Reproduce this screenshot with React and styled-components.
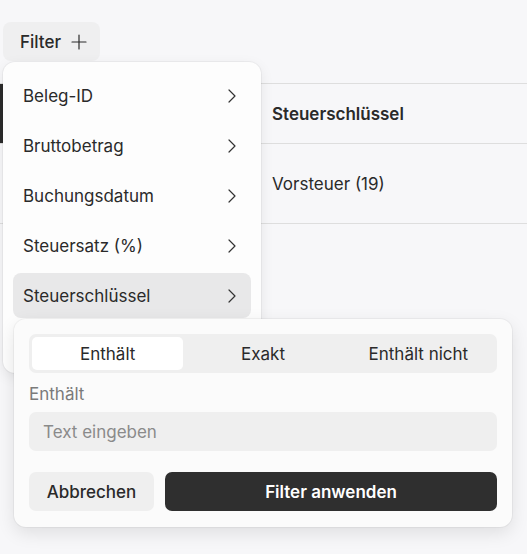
import React from "react";
import styled, { createGlobalStyle } from "styled-components";
import { ChevronRight, Plus } from "lucide-react";

const GlobalStyle = createGlobalStyle`
  * { box-sizing: border-box; }
  html, body { margin: 0; padding: 0; }
  body {
    background: #f7f7f9;
    font-family: Inter, "Noto Sans", "Liberation Sans", sans-serif;
    color: #2a2a2a;
    -webkit-font-smoothing: antialiased;
  }
`;

const Page = styled.div`
  position: relative;
  width: 527px;
  height: 554px;
  overflow: hidden;
  padding-top: 22px;
`;

const Toolbar = styled.div`
  display: flex;
  padding-left: 3px;
`;

const FilterButton = styled.button`
  display: flex;
  align-items: center;
  gap: 6px;
  height: 39px;
  padding: 0 9px 0 17px;
  border: none;
  border-radius: 8px;
  background: #efeff0;
  font: 500 17px Inter, sans-serif;
  color: #2a2a2a;
`;

const Table = styled.div`
  margin-top: 22px;
  border-top: 1px solid #dedede;
`;

const Row = styled.div`
  display: grid;
  grid-template-columns: 272px 1fr;
  align-items: center;
  height: ${(p) => p.$h}px;
  border-bottom: 1px solid #dedede;
  font-size: 17px;
  font-weight: ${(p) => (p.$head ? 600 : 400)};
  color: #2a2a2a;
`;

const LeadCell = styled.div`
  align-self: stretch;
  border-left: ${(p) => (p.$mark ? "3px solid #2c2c2c" : "none")};
`;

const Menu = styled.div`
  position: absolute;
  left: 3px;
  top: 62px;
  width: 258px;
  height: 311px;
  padding: 11px 10px;
  display: flex;
  flex-direction: column;
  gap: 5px;
  background: #fdfdfd;
  border-radius: 12px;
  box-shadow: 0 4px 14px rgba(0, 0, 0, 0.08), 0 0 0 1px rgba(0, 0, 0, 0.04);
`;

const MenuItem = styled.div`
  display: flex;
  align-items: center;
  justify-content: space-between;
  height: 45px;
  flex: none;
  padding: 0 7px 0 10px;
  border-radius: 8px;
  background: ${(p) => (p.$active ? "#e8e8e9" : "transparent")};
  font-size: 17px;
  color: #2a2a2a;
`;

const Popover = styled.div`
  position: absolute;
  left: 14px;
  top: 319px;
  width: 498px;
  padding: 15px 15px 16px;
  display: flex;
  flex-direction: column;
  background: #fbfbfb;
  border-radius: 12px;
  box-shadow: 0 6px 18px rgba(0, 0, 0, 0.1), 0 0 0 1px rgba(0, 0, 0, 0.04);
`;

const Tabs = styled.div`
  display: grid;
  grid-template-columns: repeat(3, 1fr);
  gap: 4px;
  height: 39px;
  padding: 3px;
  background: #efefef;
  border-radius: 7px;
`;

const Tab = styled.div`
  display: flex;
  align-items: center;
  justify-content: center;
  border-radius: 5px;
  background: ${(p) => (p.$active ? "#ffffff" : "transparent")};
  font-size: 17px;
  color: #2a2a2a;
`;

const Label = styled.div`
  margin-top: 11px;
  font-size: 17px;
  line-height: 21px;
  color: #7a7a7a;
`;

const Input = styled.input`
  margin-top: 7px;
  height: 39px;
  padding: 0 14px;
  border: none;
  border-radius: 7px;
  background: #efefef;
  font: 400 17px Inter, sans-serif;
  color: #2a2a2a;
  outline: none;
  &::placeholder { color: #8a8a8a; }
`;

const Actions = styled.div`
  display: flex;
  gap: 11px;
  margin-top: 21px;
`;

const ActionButton = styled.button`
  height: 39px;
  border: none;
  border-radius: 7px;
  padding: 0 ${(p) => (p.$primary ? 0 : 12)}px;
  flex: ${(p) => (p.$primary ? 1 : "none")};
  width: ${(p) => (p.$primary ? "auto" : "125px")};
  background: ${(p) => (p.$primary ? "#2f2f2f" : "#efefef")};
  color: ${(p) => (p.$primary ? "#ffffff" : "#2a2a2a")};
  font: ${(p) => (p.$primary ? 600 : 500)} 17px Inter, sans-serif;
`;

const fields = ["Beleg-ID", "Bruttobetrag", "Buchungsdatum", "Steuersatz (%)", "Steuerschlüssel"];

export default function App() {
  return (
    <>
      <GlobalStyle />
      <Page>
        <Toolbar>
          <FilterButton>
            Filter
            <Plus size={24} strokeWidth={1.2} />
          </FilterButton>
        </Toolbar>
        <Table>
          <Row $h={60} $head>
            <LeadCell $mark />
            <div>Steuerschlüssel</div>
          </Row>
          <Row $h={80}>
            <LeadCell />
            <div>Vorsteuer (19)</div>
          </Row>
        </Table>

        <Menu>
          {fields.map((f) => (
            <MenuItem key={f} $active={f === "Steuerschlüssel"}>
              {f}
              <ChevronRight size={24} strokeWidth={1.2} color="#333" />
            </MenuItem>
          ))}
        </Menu>

        <Popover>
          <Tabs>
            <Tab $active>Enthält</Tab>
            <Tab>Exakt</Tab>
            <Tab>Enthält nicht</Tab>
          </Tabs>
          <Label>Enthält</Label>
          <Input placeholder="Text eingeben" />
          <Actions>
            <ActionButton>Abbrechen</ActionButton>
            <ActionButton $primary>Filter anwenden</ActionButton>
          </Actions>
        </Popover>
      </Page>
    </>
  );
}
